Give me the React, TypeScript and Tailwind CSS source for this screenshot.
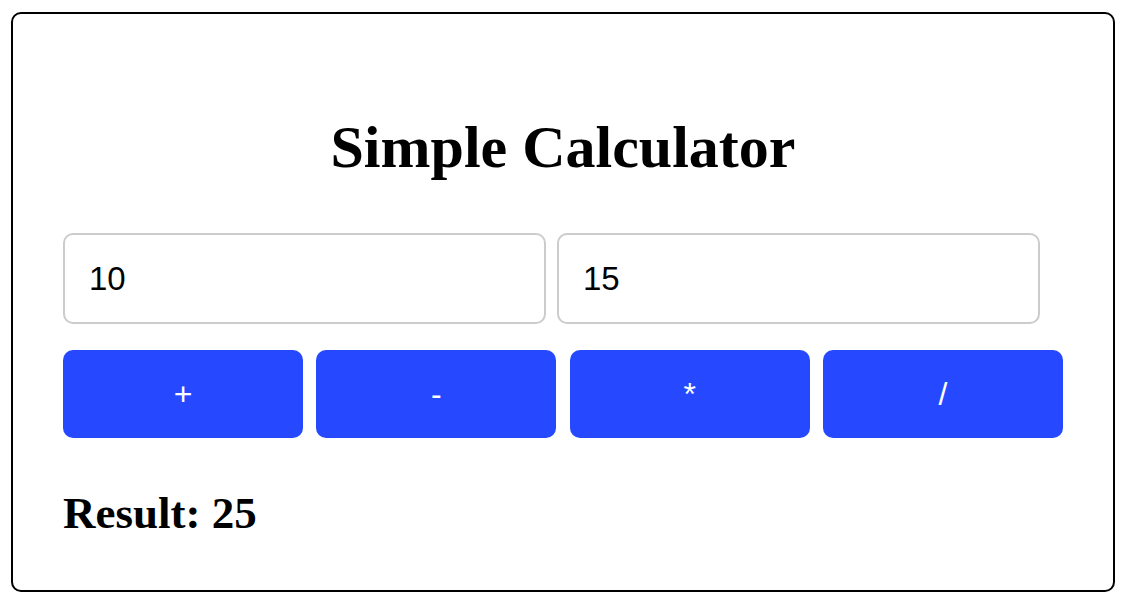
import { useState } from "react";

const OPS = ["+", "-", "*", "/"] as const;

export default function App() {
  const [a, setA] = useState("10");
  const [b, setB] = useState("15");
  const [result, setResult] = useState<number | string>(25);

  const calc = (op: string) => {
    const x = parseFloat(a);
    const y = parseFloat(b);
    if (op === "+") setResult(x + y);
    if (op === "-") setResult(x - y);
    if (op === "*") setResult(x * y);
    if (op === "/") setResult(y === 0 ? "Error" : x / y);
  };

  return (
    <div className="min-h-screen bg-white">
      <div className="ml-[11px] mt-[12px] flex h-[580px] w-[1104px] flex-col rounded-[10px] border-2 border-black px-[50px]">
        {/* Title */}
        <h1 className="mt-[99px] text-center font-['Liberation_Serif',serif] text-[60px] font-bold leading-[69px] text-black">
          Simple Calculator
        </h1>

        {/* Inputs */}
        <div className="mt-[51px] flex gap-[11px]">
          <input
            value={a}
            onChange={(e) => setA(e.target.value)}
            className="h-[91px] w-[483px] rounded-[10px] border-2 border-[#cccccc] px-6 font-['Liberation_Sans',sans-serif] text-[33px] text-black outline-none"
          />
          <input
            value={b}
            onChange={(e) => setB(e.target.value)}
            className="h-[91px] w-[483px] rounded-[10px] border-2 border-[#cccccc] px-6 font-['Liberation_Sans',sans-serif] text-[33px] text-black outline-none"
          />
        </div>

        {/* Operators */}
        <div className="mt-[26px] grid grid-cols-4 gap-[13.3px]">
          {OPS.map((op) => (
            <button
              key={op}
              onClick={() => calc(op)}
              className="h-[88px] rounded-[10px] bg-[#2649ff] font-['Liberation_Sans',sans-serif] text-[32px] text-white"
            >
              {op}
            </button>
          ))}
        </div>

        {/* Result */}
        <h2 className="mt-[50px] font-['Liberation_Serif',serif] text-[45px] font-bold leading-[51px] text-black">
          Result: {result}
        </h2>
      </div>
    </div>
  );
}
